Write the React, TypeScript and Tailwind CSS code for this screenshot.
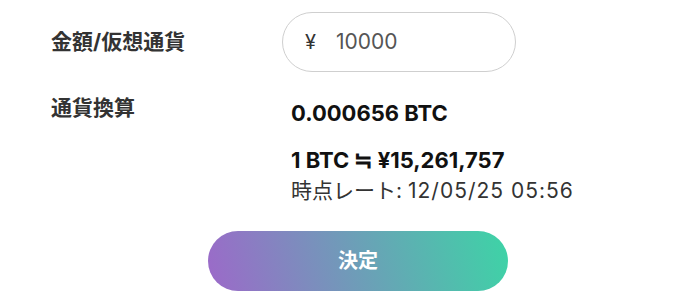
import { useState } from "react";

const font = {
    fontFamily: 'Inter, "Noto Sans CJK JP", sans-serif',
};

export default function App() {
    const [amount, setAmount] = useState("10000");

    return (
        <div className="w-[700px] h-[300px] bg-white text-[#333]" style={font}>
            <div className="flex pt-[12px]">
                <div className="w-[282px] pl-[51px] flex items-center h-[60px]">
                    <span className="text-[21px] font-bold">金額/仮想通貨</span>
                </div>
                <div className="w-[234px] h-[60px] rounded-full border border-[#cfcfcf] flex items-center pl-[22px] pr-[20px]">
                    <span className="text-[20px] text-[#333] mr-[20px]">¥</span>
                    <input
                        className="w-full outline-none text-[21px] text-[#555] bg-transparent"
                        value={amount}
                        onChange={(e) => setAmount(e.target.value)}
                    />
                </div>
            </div>

            <div className="flex mt-[26px]">
                <div className="w-[291px] pl-[51px]">
                    <span className="text-[21px] font-bold leading-[20px] block">通貨換算</span>
                </div>
                <div className="flex flex-col">
                    <span className="text-[22px] font-bold text-[#111] leading-[30px]">0.000656 BTC</span>
                    <span className="text-[22px] font-bold text-[#111] leading-[30px] mt-[17px]">
                        1 BTC ≒ ¥15,261,757
                    </span>
                    <span className="text-[21px] text-[#333] leading-[30px] mt-[1px]">
                        時点レート:{" "}
                        <span className="tracking-[1px]">12/05/25 05:56</span>
                    </span>
                </div>
            </div>

            <div className="flex pl-[208px] mt-[25px]">
                <button className="w-[300px] h-[60px] rounded-full bg-linear-[75deg,#9c69c9,#3dd4a6] text-white text-[20px] font-bold">
                    決定
                </button>
            </div>
        </div>
    );
}
